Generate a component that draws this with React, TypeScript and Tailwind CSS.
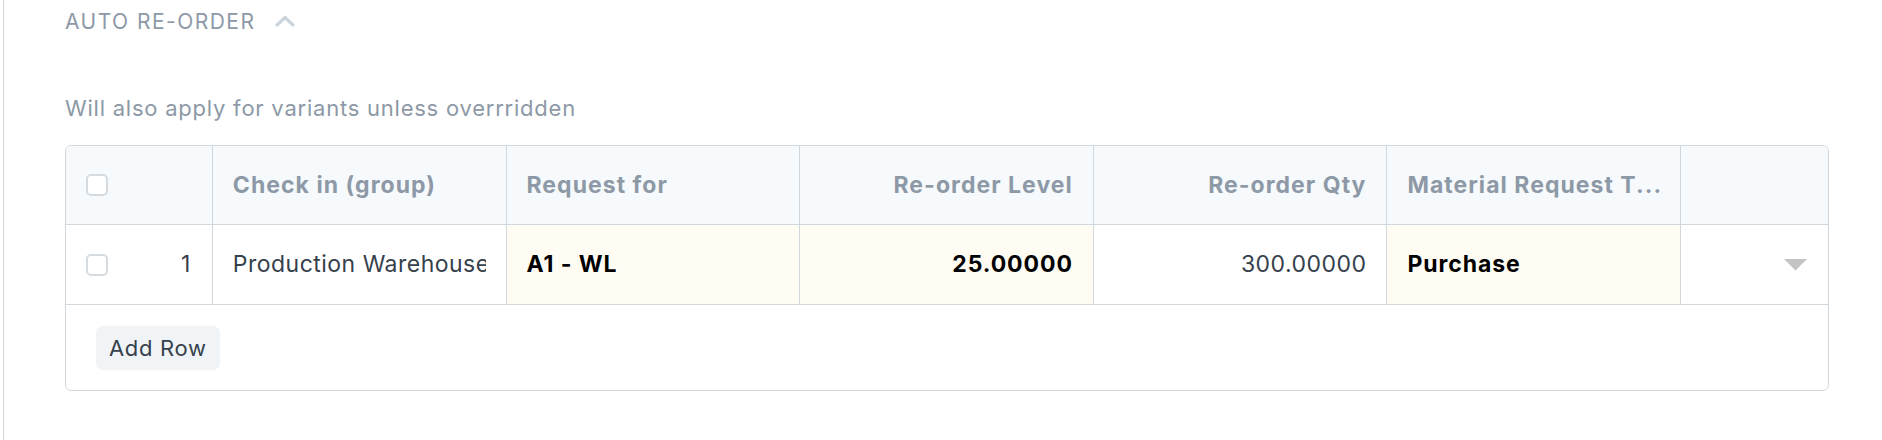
import React from "react";

const cols = [
  { label: "Check in (group)", align: "left" },
  { label: "Request for", align: "left" },
  { label: "Re-order Level", align: "right" },
  { label: "Re-order Qty", align: "right" },
  { label: "Material Request T...", align: "left" },
];

function Checkbox() {
  return <span className="block w-[22px] h-[22px] rounded-[5px] border-2 border-[#d4dce2] bg-white" />;
}

export default function App() {
  return (
    <div className="min-h-[440px] bg-white font-['Inter',sans-serif]">
      <div className="ml-[3px] min-h-[440px] border-l border-[#d1d8dd] pl-[61px] pr-[53px] pt-[8px]">
        {/* Section head */}
        <div className="flex items-center h-[28px] gap-[20px]">
          <span className="text-[21px] leading-[28px] tracking-[0.07em] text-[#8d99a6]">AUTO RE-ORDER</span>
          <svg width="20" height="12" viewBox="0 0 20 12" className="mt-[-2px]">
            <path d="M2 10 L10 2.5 L18 10" fill="none" stroke="#cdd5dc" strokeWidth="3.2" strokeLinecap="round" strokeLinejoin="round" />
          </svg>
        </div>

        <p className="mt-[58px] text-[22px] leading-[28px] tracking-[0.035em] text-[#8d99a6]">
          Will also apply for variants unless overrridden
        </p>

        {/* Grid */}
        <div className="mt-[23px] rounded-[6px] border border-[#d1d8dd] overflow-hidden tracking-[0.03em]">
          <div className="grid grid-cols-12 h-[79px] bg-[#f7fafc] border-b border-[#d1d8dd] text-[23px] font-bold tracking-[0.045em] text-[#8d99a6]">
            <div className="col-span-1 border-r border-[#d1d8dd] flex items-center pl-[20px]">
              <Checkbox />
            </div>
            {cols.map((c) => (
              <div
                key={c.label}
                className={`col-span-2 border-r border-[#d1d8dd] flex items-center px-[20px] whitespace-nowrap overflow-hidden ${
                  c.align === "right" ? "justify-end" : "justify-start"
                }`}
              >
                {c.label}
              </div>
            ))}
            <div className="col-span-1" />
          </div>

          <div className="grid grid-cols-12 h-[80px] border-b border-[#d1d8dd] text-[23px] text-[#36414c]">
            <div className="col-span-1 border-r border-[#d1d8dd] flex items-center justify-between pl-[20px] pr-[21px]">
              <Checkbox />
              <span>1</span>
            </div>
            <div className="col-span-2 border-r border-[#d1d8dd] flex items-center pl-[20px] pr-[20px] min-w-0">
              <span className="block overflow-hidden whitespace-nowrap">Production Warehouse</span>
            </div>
            <div className="col-span-2 border-r border-[#d1d8dd] bg-[#fffcf4] flex items-center px-[20px] font-bold tracking-[0.04em] text-black">
              A1 - WL
            </div>
            <div className="col-span-2 border-r border-[#d1d8dd] bg-[#fffcf4] flex items-center justify-end px-[20px] font-bold tracking-[0.04em] text-black">
              25.00000
            </div>
            <div className="col-span-2 border-r border-[#d1d8dd] flex items-center justify-end px-[20px]">
              300.00000
            </div>
            <div className="col-span-2 border-r border-[#d1d8dd] bg-[#fffcf4] flex items-center px-[20px] font-bold tracking-[0.04em] text-black">
              Purchase
            </div>
            <div className="col-span-1 flex items-center justify-end pr-[21px]">
              <svg width="23" height="12" viewBox="0 0 23 12">
                <path d="M0 0 H23 L11.5 11.5 Z" fill="#c4c4c4" />
              </svg>
            </div>
          </div>

          <div className="h-[85px] pl-[30px] pt-[21px]">
            <button className="h-[44px] px-[13px] rounded-[7px] bg-[#f0f4f7] text-[22px] tracking-[0.03em] text-[#36414c]">
              Add Row
            </button>
          </div>
        </div>
      </div>
    </div>
  );
}
